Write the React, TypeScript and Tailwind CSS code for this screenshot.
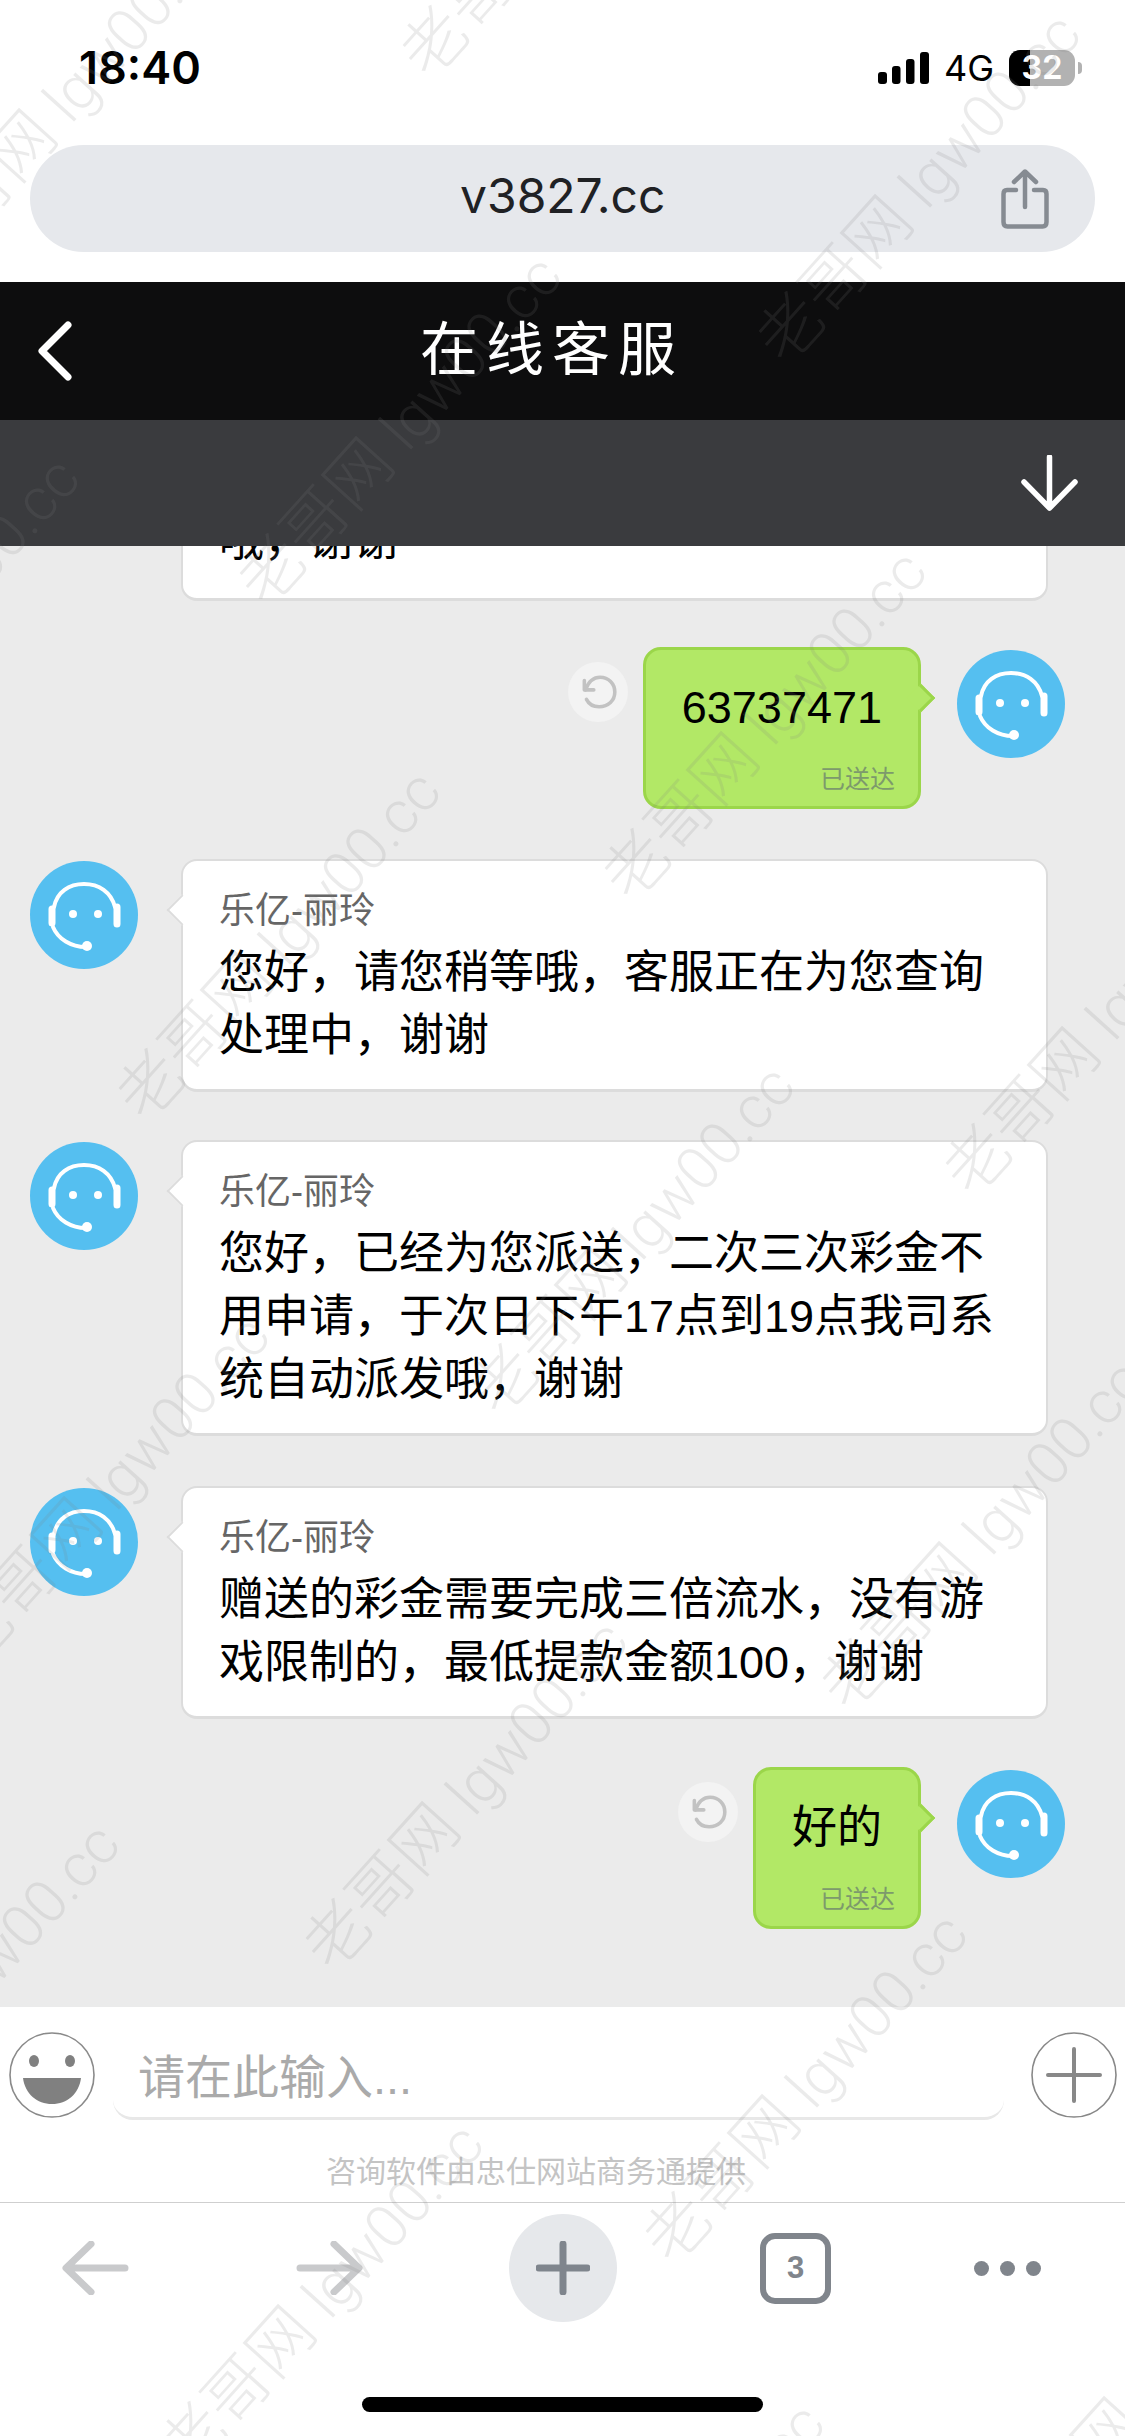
const marks = [
  [400, 430], [765, 725], [1106, 1020], [279, 945], [633, 1240], [983, 1535],
  [108, 1490], [466, 1795], [806, 2088], [1148, 2390], [-42, 1998], [322, 2298],
  [663, 2578], [-82, 632], [63, 102], [563, -98], [919, 188],
];

function Avatar() {
  return (
    <div className="w-[108px] h-[108px] flex-none rounded-full bg-[#55bff0]">
      <svg viewBox="0 0 108 108" className="w-full h-full" fill="none" stroke="#fff" strokeLinecap="round">
        <path d="M24 46C27 31 39 23 54 23C69 23 81 31 85 46" strokeWidth="4" />
        <path d="M22 48V62M87 46V63" strokeWidth="7" />
        <path d="M23 66C28 78 41 86 56 86" strokeWidth="4" />
        <circle cx="57" cy="85" r="5" fill="#fff" stroke="none" />
        <circle cx="43" cy="53" r="4" fill="#fff" stroke="none" />
        <circle cx="68" cy="53" r="4" fill="#fff" stroke="none" />
      </svg>
    </div>
  );
}

function Incoming({ lines, className, bodyClass }: { lines: string; className?: string; bodyClass?: string }) {
  return (
    <div className={`flex items-start pl-[30px] pr-[77px] ${className ?? ""}`}>
      <div className="mt-[2px]">
        <Avatar />
      </div>
      <div className="relative ml-[43px] flex-1 rounded-[16px] border-2 border-[#dcdcdc] border-b-[3px] bg-white px-[36px] pt-[26px] pb-[22px]">
        <div className="absolute -left-[12px] top-[38px] w-[22px] h-[22px] rotate-45 border-b-2 border-l-2 border-[#dcdcdc] bg-white" />
        <div className="text-[36px] leading-[48px] text-[#666]">乐亿-丽玲</div>
        <div className={`mt-[6px] text-[45px] leading-[63px] text-black ${bodyClass ?? ""}`}>{lines}</div>
      </div>
    </div>
  );
}

function Outgoing({ text, className }: { text: string; className?: string }) {
  return (
    <div className={`flex items-start justify-end pr-[60px] ${className ?? ""}`}>
      <div className="mt-[15px] mr-[15px] flex w-[60px] h-[60px] items-center justify-center rounded-full bg-[#f3f3f3]">
        <svg viewBox="0 0 40 40" className="w-[42px] h-[42px]" fill="none" stroke="#c2c2c2" strokeWidth="3.4" strokeLinecap="round" strokeLinejoin="round">
          <path d="M7 9V18H16" />
          <path d="M8 18C11 10 16 6 22 6C30 6 36 12 36 20C36 28 30 34 21 34C15 34 11 31 9 27" />
        </svg>
      </div>
      <div className="relative rounded-[18px] border-[3px] border-[#9bd64a] bg-[#b2e866] pl-[36px] pr-[23px] pt-[26px] pb-[9px]">
        <div className="absolute -right-[13px] top-[38px] w-[20px] h-[20px] rotate-45 border-t-[3px] border-r-[3px] border-[#9bd64a] bg-[#b2e866]" />
        <div className="pr-[13px] text-[45px] leading-[63px] text-black">{text}</div>
        <div className="mt-[22px] text-right text-[25px] leading-[36px] text-[#7d9a6c]">已送达</div>
      </div>
      <div className="ml-[36px] mt-[3px]">
        <Avatar />
      </div>
    </div>
  );
}

export default function App() {
  return (
    <div className="relative w-[1125px] h-[2436px] overflow-hidden bg-white font-['Liberation_Sans','Noto_Sans_CJK_SC',sans-serif]">
      <div className="flex h-[136px] items-center justify-between pl-[79px] pr-[43px]">
        <span className="font-['Inter'] text-[45px] font-semibold text-black">18:40</span>
        <div className="flex items-center">
          <svg viewBox="0 0 51 32" className="w-[51px] h-[32px]" fill="#000">
            <rect x="0" y="20" width="9" height="12" rx="3" />
            <rect x="14" y="14" width="8.5" height="18" rx="3" />
            <rect x="28" y="7" width="8.5" height="25" rx="3" />
            <rect x="42" y="0" width="9" height="32" rx="3" />
          </svg>
          <span className="ml-[15px] font-['Inter'] text-[36px] leading-none text-black">4G</span>
          <div className="relative ml-[15px] flex w-[66px] h-[36px] items-center justify-center overflow-hidden rounded-[11px] bg-[#b2b2b2]">
            <div className="absolute inset-y-0 left-0 w-[21px] bg-black" />
            <span className="relative font-['Inter'] text-[32px] font-bold leading-none text-white">32</span>
          </div>
          <div className="ml-[3px] w-[4px] h-[12px] rounded-r-full bg-[#b2b2b2]" />
        </div>
      </div>

      <div className="mx-[30px] mt-[9px] mb-[30px] flex h-[107px] w-[1065px] items-center rounded-full bg-[#e6e8ec] pl-[430px] pr-[46px]">
        <span className="pb-[5px] font-['Inter'] text-[48px] text-[#202124]">v3827.cc</span>
        <svg viewBox="0 0 48 60" className="ml-auto w-[48px] h-[60px]" fill="none" stroke="#868b92" strokeWidth="4.5" strokeLinecap="round" strokeLinejoin="round">
          <path d="M15 21H6C3.5 21 2.5 22.5 2.5 25V53C2.5 56 4 57.5 6.5 57.5H41.5C44 57.5 45.5 56 45.5 53V25C45.5 22.5 44.5 21 42 21H33" />
          <path d="M24 38V3M13 13L24 2.5L35 13" />
        </svg>
      </div>

      <div className="flex h-[138px] items-center bg-[#0d0d0e]">
        <svg viewBox="0 0 35 60" className="ml-[37px] w-[35px] h-[60px]" fill="none" stroke="#fff" strokeWidth="7" strokeLinecap="round" strokeLinejoin="round">
          <path d="M31 4L5 30L31 56" />
        </svg>
        <h1 className="ml-[348px] pb-[4px] text-[58px] font-normal tracking-[8px] text-white">在线客服</h1>
      </div>
      <div className="flex h-[126px] items-center justify-end bg-[#3a3b3e] pr-[47px]">
        <svg viewBox="0 0 57 56" className="w-[57px] h-[56px]" fill="none" stroke="#fff" strokeWidth="5.5" strokeLinecap="round" strokeLinejoin="round">
          <path d="M28.5 2V53M3 27L28.5 53L54 27" />
        </svg>
      </div>

      <div className="flex h-[1461px] flex-col justify-end overflow-hidden bg-[#ebebeb] pb-[78px]">
        <Incoming lines="哦，谢谢" bodyClass="mb-[4px]" />
        <Outgoing text="63737471" className="mt-[46px]" />
        <Incoming className="mt-[50px]" lines="您好，请您稍等哦，客服正在为您查询处理中，谢谢" />
        <Incoming className="mt-[48px]" lines="您好，已经为您派送，二次三次彩金不用申请，于次日下午17点到19点我司系统自动派发哦，谢谢" />
        <Incoming className="mt-[50px]" lines="赠送的彩金需要完成三倍流水，没有游戏限制的，最低提款金额100，谢谢" />
        <Outgoing text="好的" className="mt-[48px]" />
      </div>

      <div className="flex items-start pt-[25px] pl-[9px]">
        <svg viewBox="0 0 86 86" className="w-[86px] h-[86px] flex-none">
          <circle cx="43" cy="43" r="42" fill="#fff" stroke="#8a8a8a" strokeWidth="1.6" />
          <ellipse cx="25" cy="29" rx="5" ry="6" fill="#808080" />
          <ellipse cx="61" cy="29" rx="5" ry="6" fill="#808080" />
          <path d="M14 46H72C70 62 58 72 43 72C28 72 16 62 14 46Z" fill="#808080" />
        </svg>
        <div className="ml-[18px] flex h-[88px] w-[891px] items-center rounded-[20px] border-b-[3px] border-[#e8e8e8] pl-[25px] pt-[8px] text-[47px] text-[#aaa]">
          请在此输入...
        </div>
        <svg viewBox="0 0 86 86" className="ml-[27px] w-[86px] h-[86px] flex-none" fill="none" stroke="#888">
          <circle cx="43" cy="43" r="42" strokeWidth="1.6" />
          <path d="M17 43H69M43 17V69" strokeWidth="4" strokeLinecap="round" />
        </svg>
      </div>
      <div className="mt-[30px] pr-[53px] text-center text-[30px] leading-[44px] text-[#c4c4c4]">咨询软件由忠仕网站商务通提供</div>
      <div className="mt-[8px] h-[1px] bg-[#cfcfcf]" />

      <div className="flex items-center pt-[11px] pl-[62px]">
        <svg viewBox="0 0 67 54" className="w-[67px] h-[54px]" fill="none" stroke="#c9cacc" strokeWidth="7" strokeLinecap="round" strokeLinejoin="round">
          <path d="M63 27H5M29 3L4 27L29 51" />
        </svg>
        <svg viewBox="0 0 67 54" className="ml-[167px] w-[67px] h-[54px]" fill="none" stroke="#c9cacc" strokeWidth="7" strokeLinecap="round" strokeLinejoin="round">
          <path d="M4 27H62M38 3L63 27L38 51" />
        </svg>
        <div className="ml-[146px] flex w-[108px] h-[108px] items-center justify-center rounded-full bg-[#e6e8eb]">
          <svg viewBox="0 0 54 54" className="w-[54px] h-[54px]" fill="none" stroke="#7f858d" strokeWidth="7" strokeLinecap="round">
            <path d="M3 27H51M27 3V51" />
          </svg>
        </div>
        <div className="ml-[143px] flex w-[71px] h-[71px] items-center justify-center rounded-[15px] border-[6px] border-[#80858c] text-[31px] font-bold text-[#80858c]">
          3
        </div>
        <div className="ml-[143px] flex gap-[11px]">
          <div className="w-[15px] h-[15px] rounded-full bg-[#80858c]" />
          <div className="w-[15px] h-[15px] rounded-full bg-[#80858c]" />
          <div className="w-[15px] h-[15px] rounded-full bg-[#80858c]" />
        </div>
      </div>
      <div className="absolute bottom-[24px] left-[362px] w-[401px] h-[15px] rounded-full bg-black" />

      <div className="pointer-events-none absolute inset-0">
        {marks.map(([x, y], i) => (
          <div
            key={i}
            className="absolute -translate-x-1/2 -translate-y-1/2 -rotate-[48deg] whitespace-nowrap font-['Roboto','Noto_Sans_CJK_SC',sans-serif] text-[65px] font-light text-[#80808028]"
            style={{ left: x, top: y }}
          >
            老哥网 <span className="text-[60px]">lgw00.cc</span>
          </div>
        ))}
      </div>
    </div>
  );
}
